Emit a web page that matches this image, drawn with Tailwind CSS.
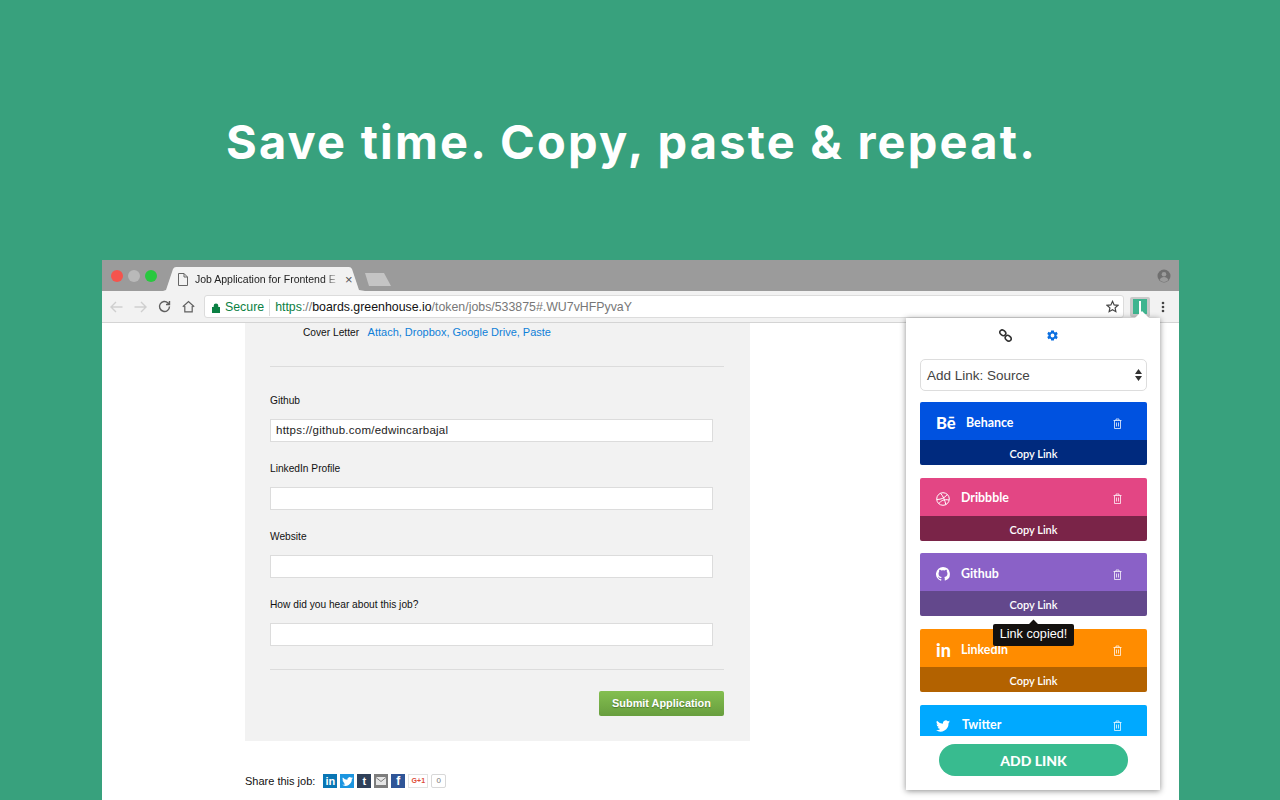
<!DOCTYPE html>
<html><head><meta charset="utf-8"><script src="https://cdn.jsdelivr.net/npm/@tailwindcss/browser@4"></script></head>
<body class="m-0 w-[1280px] h-[800px] overflow-hidden bg-[#38a17d] font-['Liberation_Sans',sans-serif]">
<div class="h-[260px] pt-[22px] pr-[17px] flex items-center justify-center">
  <h1 class="text-white text-[47px] font-bold tracking-[2.200px] font-['Inter',sans-serif] leading-none whitespace-nowrap">Save time. Copy, paste &amp; repeat.</h1>
</div>
<div class="relative ml-[102px] w-[1077px] h-[540px] flex flex-col bg-white">
  <!-- tab strip -->
  <div class="h-[31px] bg-[#9b9b9b] flex items-end relative shrink-0">
    <div class="flex gap-[5px] ml-[9px] mb-[9px] self-end">
      <span class="w-[12px] h-[12px] rounded-full bg-[#f5544d]"></span>
      <span class="w-[12px] h-[12px] rounded-full bg-[#b9b9b9]"></span>
      <span class="w-[12px] h-[12px] rounded-full bg-[#28c83f]"></span>
    </div>
    <div class="ml-[6px] relative w-[202px] h-[24px] flex items-center pl-[15px] pt-[1px]">
      <svg class="absolute left-0 top-0" width="202" height="24" viewBox="0 0 202 24"><path d="M0 24 L3 23 L10 2 Q11 0 13 0 L186 0 Q188 0 189 2 L196 23 L202 24 Z" fill="#f2f2f2"/></svg>
      <svg class="relative mr-[7px]" width="10" height="13" viewBox="0 0 10 13" fill="none" stroke="#666" stroke-width="1"><path d="M.5.5H6L9.500 4V12.500H.5ZM6 .5V4H9.500"/></svg>
      <span class="relative w-[146px] overflow-hidden whitespace-nowrap text-[10.500px] text-[#222] [mask-image:linear-gradient(to_right,#000_88%,transparent)]">Job Application for Frontend E</span>
      <span class="relative ml-[4px] text-[13px] leading-none text-[#555]">×</span>
    </div>
    <svg class="ml-[-1px] mb-[4px]" width="28" height="14" viewBox="0 0 28 14"><path d="M1 0H20L27 13H5Z" fill="#c4c4c4"/></svg>
    <svg class="absolute right-[8px] top-[9px]" width="14" height="14" viewBox="0 0 14 14"><circle cx="7" cy="7" r="6.500" fill="#6f6f6f"/><circle cx="7" cy="5.200" r="2.300" fill="#9b9b9b"/><path d="M2.600 11c.6-2 2.600-3 4.400-3s3.800 1 4.400 3a6 6 0 0 1-8.800 0Z" fill="#9b9b9b"/></svg>
  </div>
  <!-- toolbar -->
  <div class="h-[32px] bg-[#f2f2f2] border-b border-[#d4d4d4] flex items-center shrink-0 relative">
    <div class="flex items-center gap-[11px] ml-[8px] w-[94px]">
      <svg width="13" height="12" viewBox="0 0 13 12" fill="none" stroke="#cfcfcf" stroke-width="1.400"><path d="M12.500 6H1M6 1 1 6l5 5"/></svg>
      <svg width="13" height="12" viewBox="0 0 13 12" fill="none" stroke="#cfcfcf" stroke-width="1.400"><path d="M.5 6H12M7 1l5 5-5 5"/></svg>
      <svg width="13" height="13" viewBox="0 0 13 13" fill="none" stroke="#5f5f5f" stroke-width="1.400"><path d="M11.500 6.500a5 5 0 1 1-1.500-3.600L11.500 4.500M11.500 1v3.500H8"/></svg>
      <svg width="13" height="13" viewBox="0 0 13 13" fill="none" stroke="#5f5f5f" stroke-width="1.200"><path d="M.8 6.800 6.500 1.500l5.700 5.300M2.800 6v5.800h7.400V6"/></svg>
    </div>
    <div class="w-[920px] h-[23px] pt-[2px] bg-white rounded-[3px] border border-[#dcdcdc] flex items-center text-[12.350px] whitespace-nowrap">
      <svg class="ml-[7px] mr-[5px]" width="8" height="10" viewBox="0 0 8 10"><path d="M1.700 4V2.800a2.300 2.300 0 0 1 4.600 0V4H8v6H0V4Z" fill="#0b8043"/></svg>
      <span class="text-[#0b8043] pr-[5px] border-r border-[#dddddd] h-[17px] leading-[17px]">Secure</span>
      <span class="ml-[5px] text-[#0b8043]">https</span><span class="text-[#777]">://</span><span class="text-[#111]">boards.greenhouse.io</span><span class="text-[#777]">/token/jobs/533875#.WU7vHFPyvaY</span>
      <svg class="ml-auto mr-[4px] mb-[2px]" width="13" height="13" viewBox="0 0 24 24" fill="none" stroke="#444" stroke-width="2.200"><path d="M12 2.500 15 9l7 .8-5.200 4.700L18.200 21.500 12 18l-6.200 3.500 1.400-7L2 9.800 9 9Z"/></svg>
    </div>
    <div class="ml-[6px] w-[20px] h-[20px] bg-[#c9c9c9] rounded-[2px] flex items-center justify-center">
      <div class="w-[14px] h-[15px] bg-[#3fb48f] flex justify-center"><span class="w-[2px] h-[13px] mt-[2px] bg-white"></span></div>
    </div>
    <svg class="ml-[11px]" width="4" height="12" viewBox="0 0 4 12" fill="#444"><circle cx="2" cy="2" r="1.300"/><circle cx="2" cy="6" r="1.300"/><circle cx="2" cy="10" r="1.300"/></svg>
  </div>
  <!-- page -->
  <div class="flex-1 overflow-hidden pl-[143px] text-[11px] text-[#111]">
    <div class="w-[505px] h-[418px] bg-[#f2f2f2] px-[25px] pt-[3px]">
      <div class="pl-[33px] flex items-center h-[13px]"><span class="text-[10.200px]">Cover Letter</span><span class="ml-[8.500px] text-[#0f80d8]">Attach, Dropbox, Google Drive, Paste</span></div>
      <div class="mt-[27px] border-t border-[#dcdcdc] w-[454px]"></div>
      <div class="mt-[27px] h-[13px] leading-[13px] text-[10.200px]">Github</div>
      <div class="mt-[12px] w-[443px] h-[23px] bg-white border border-[#dcdcdc] px-[5px] text-[11.500px] leading-[21px] tracking-[0.25px] text-[#222]">https://github.com/edwincarbajal</div>
      <div class="mt-[20px] h-[13px] leading-[13px] text-[10.200px]">LinkedIn Profile</div>
      <div class="mt-[12px] w-[443px] h-[23px] bg-white border border-[#dcdcdc]"></div>
      <div class="mt-[20px] h-[13px] leading-[13px] text-[10.200px]">Website</div>
      <div class="mt-[12px] w-[443px] h-[23px] bg-white border border-[#dcdcdc]"></div>
      <div class="mt-[20px] h-[13px] leading-[13px] text-[10.200px]">How did you hear about this job?</div>
      <div class="mt-[12px] w-[443px] h-[23px] bg-white border border-[#dcdcdc]"></div>
      <div class="mt-[23px] border-t border-[#dcdcdc] w-[454px]"></div>
      <div class="mt-[21px] w-[454px] flex justify-end">
        <div class="w-[125px] h-[25px] rounded-[2px] bg-gradient-to-b from-[#84bf50] to-[#689e3e] text-white font-bold text-[10.900px] flex items-center justify-center [text-shadow:0_1px_1px_rgba(0,0,0,0.3)]">Submit Application</div>
      </div>
    </div>
    <div class="mt-[33px] flex items-center h-[14px]">
      <span class="mr-[8px]">Share this job:</span>
      <div class="flex gap-[3px]">
        <span class="w-[14px] h-[14px] bg-[#0976b4] text-white text-[11px] font-bold leading-[14px] text-center">in</span>
        <span class="w-[14px] h-[14px] bg-[#1b95e0] flex items-center justify-center"><svg width="11" height="9" viewBox="0 0 24 20" fill="#fff"><path d="M24 2.400a10 10 0 0 1-2.800.8A5 5 0 0 0 23.300.5a10 10 0 0 1-3.100 1.200A5 5 0 0 0 11.800 6 14 14 0 0 1 1.700.9a5 5 0 0 0 1.500 6.600 5 5 0 0 1-2.200-.6 5 5 0 0 0 3.900 4.900 5 5 0 0 1-2.200.1 5 5 0 0 0 4.600 3.400A10 10 0 0 1 0 17.400 14 14 0 0 0 21.500 5 10 10 0 0 0 24 2.400Z"/></svg></span>
        <span class="w-[14px] h-[14px] bg-[#2f4059] text-white text-[11px] font-bold leading-[14px] text-center">t</span>
        <span class="w-[14px] h-[14px] bg-[#7d7d7d] flex items-center justify-center"><svg width="10" height="8" viewBox="0 0 10 8"><rect width="10" height="8" fill="#e6e6e6"/><path d="M0 .5 5 4.500 10 .5" fill="none" stroke="#7d7d7d"/></svg></span>
        <span class="w-[14px] h-[14px] bg-[#2f5597] text-white text-[12px] font-bold leading-[15px] text-center">f</span>
        <span class="w-[20px] h-[14px] bg-white border border-[#e2e2e2] text-[#dd4b39] text-[7px] font-bold leading-[12px] text-center">G+1</span>
      </div>
      <span class="ml-[3px] w-[15px] h-[14px] bg-white border border-[#d8d8d8] rounded-[2px] text-[#777] text-[8px] leading-[12px] text-center">0</span>
    </div>
  </div>
  <!-- popup -->
  <div class="absolute left-[804px] top-[58px] w-[254px] h-[472px] bg-white shadow-[0_1px_6px_rgba(0,0,0,0.45)] pl-[14px] pr-[13px] flex flex-col font-['Lato',sans-serif]">
    <span class="absolute right-[13px] top-[-5px] w-[10px] h-[10px] bg-white rotate-45"></span>
    <div class="h-[41px] shrink-0 flex items-start pt-[11px] justify-center gap-[34px] pr-[9px]">
      <svg width="13" height="13" viewBox="0 0 13 13" fill="none" stroke="#333" stroke-width="1.600"><ellipse cx="3.800" cy="3.800" rx="3.200" ry="2.500" transform="rotate(40 3.800 3.800)"/><ellipse cx="9.200" cy="9.200" rx="3.200" ry="2.500" transform="rotate(40 9.200 9.200)"/></svg>
      <svg width="13" height="13" viewBox="0 0 24 24" fill="#0a6ee0"><path d="M19.400 13a7.600 7.600 0 0 0 0-2l2.300-1.700-2.300-4-2.600 1.100a7.500 7.500 0 0 0-1.800-1L14.600 2.600H9.400L9 5.400a7.500 7.500 0 0 0-1.800 1L4.600 5.300l-2.300 4L4.600 11a7.600 7.600 0 0 0 0 2l-2.300 1.700 2.300 4 2.600-1.100a7.500 7.500 0 0 0 1.800 1l.4 2.800h5.200l.4-2.800a7.500 7.500 0 0 0 1.800-1l2.600 1.100 2.300-4ZM12 15.500a3.500 3.500 0 1 1 0-7 3.500 3.500 0 0 1 0 7Z"/></svg>
    </div>
    <div class="h-[32px] shrink-0 rounded-[5px] border border-[#dddddd] flex items-center pl-[6px] pr-[4px] text-[13.500px] text-[#444] font-['Liberation_Sans',sans-serif]">
      <span class="pt-[2px]">Add Link: Source</span>
      <svg class="ml-auto" width="7" height="14" viewBox="0 0 7 14" fill="#333"><path d="M3.500 1 7 6H0ZM3.500 13 0 8h7Z"/></svg>
    </div>
    <div class="mt-[11px] h-[334px] overflow-hidden shrink-0">
      <div class="h-[63px] rounded-[2px] overflow-hidden mb-[12.700px] flex flex-col text-white">
        <div class="h-[38px] bg-[#0052e0] flex items-center pt-[4px] pl-[16px] pr-[25px]"><span class="w-[30px] text-[16.500px] font-black leading-none">Bē</span><span class="text-[12.400px] font-bold">Behance</span>
          <svg class="ml-auto" width="9" height="11" viewBox="0 0 9 11" fill="none" stroke="#fff" stroke-opacity=".75"><path d="M.5 2.500h8M3 2.500V1h3v1.500M1.500 2.500v8h6v-8M3.500 4.500v4M5.500 4.500v4"/></svg></div>
        <div class="h-[25px] bg-[#002a7e] text-center text-[11px] font-semibold leading-[27px]">Copy Link</div>
      </div>
      <div class="h-[63px] rounded-[2px] overflow-hidden mb-[12.700px] flex flex-col text-white">
        <div class="h-[38px] bg-[#e34684] flex items-center pt-[4px] pl-[16px] pr-[25px]"><svg class="mr-[11px]" width="14" height="14" viewBox="0 0 14 14" fill="none" stroke="#fff"><circle cx="7" cy="7" r="6.300"/><path d="M4.500 1.300C7 4 9 8 9.800 12.700M1 7.500C5 7.500 9 6 11.200 2.500M2.800 11.700C5 8.500 8 7 13 8"/></svg><span class="text-[12.400px] font-bold">Dribbble</span>
          <svg class="ml-auto" width="9" height="11" viewBox="0 0 9 11" fill="none" stroke="#fff" stroke-opacity=".75"><path d="M.5 2.500h8M3 2.500V1h3v1.500M1.500 2.500v8h6v-8M3.500 4.500v4M5.500 4.500v4"/></svg></div>
        <div class="h-[25px] bg-[#7a2448] text-center text-[11px] font-semibold leading-[27px]">Copy Link</div>
      </div>
      <div class="h-[63px] rounded-[2px] overflow-hidden mb-[12.700px] flex flex-col text-white">
        <div class="h-[38px] bg-[#8a61c7] flex items-center pt-[4px] pl-[16px] pr-[25px]"><svg class="mr-[11px]" width="14" height="14" viewBox="0 0 16 16" fill="#fff"><path d="M8 0a8 8 0 0 0-2.500 15.600c.4.100.5-.2.500-.4v-1.400c-2.200.5-2.700-1-2.700-1-.4-.9-.9-1.200-.9-1.200-.7-.5.100-.5.100-.5.800.1 1.200.8 1.200.8.700 1.200 1.900.9 2.300.7.100-.5.300-.9.500-1.100-1.800-.2-3.600-.9-3.600-4 0-.9.300-1.600.8-2.100-.1-.2-.4-1 .1-2.100 0 0 .7-.2 2.200.8a7.600 7.600 0 0 1 4 0c1.500-1 2.200-.8 2.200-.8.400 1.100.2 1.900.1 2.100.5.600.8 1.300.8 2.100 0 3.100-1.900 3.700-3.700 3.900.3.300.6.800.6 1.500v2.200c0 .2.100.5.600.4A8 8 0 0 0 8 0Z"/></svg><span class="text-[12.400px] font-bold">Github</span>
          <svg class="ml-auto" width="9" height="11" viewBox="0 0 9 11" fill="none" stroke="#fff" stroke-opacity=".75"><path d="M.5 2.500h8M3 2.500V1h3v1.500M1.500 2.500v8h6v-8M3.500 4.500v4M5.500 4.500v4"/></svg></div>
        <div class="h-[25px] bg-[#63488c] text-center text-[11px] font-semibold leading-[27px]">Copy Link</div>
      </div>
      <div class="h-[63px] rounded-[2px] overflow-hidden mb-[12.700px] flex flex-col text-white">
        <div class="h-[38px] bg-[#ff8c00] flex items-center pt-[4px] pl-[16px] pr-[25px]"><span class="w-[25px] text-[18px] font-black leading-none">in</span><span class="text-[12.400px] font-bold">LinkedIn</span>
          <svg class="ml-auto" width="9" height="11" viewBox="0 0 9 11" fill="none" stroke="#fff" stroke-opacity=".75"><path d="M.5 2.500h8M3 2.500V1h3v1.500M1.500 2.500v8h6v-8M3.500 4.500v4M5.500 4.500v4"/></svg></div>
        <div class="h-[25px] bg-[#b36200] text-center text-[11px] font-semibold leading-[27px]">Copy Link</div>
      </div>
      <div class="h-[63px] rounded-[2px] overflow-hidden flex flex-col text-white">
        <div class="h-[38px] bg-[#00a9ff] flex items-center pt-[4px] pl-[16px] pr-[25px]"><svg class="mr-[12px]" width="14" height="12" viewBox="0 0 24 20" fill="#fff"><path d="M24 2.400a10 10 0 0 1-2.800.8A5 5 0 0 0 23.300.5a10 10 0 0 1-3.100 1.200A5 5 0 0 0 11.800 6 14 14 0 0 1 1.700.9a5 5 0 0 0 1.500 6.600 5 5 0 0 1-2.200-.6 5 5 0 0 0 3.900 4.900 5 5 0 0 1-2.200.1 5 5 0 0 0 4.600 3.400A10 10 0 0 1 0 17.400 14 14 0 0 0 21.500 5 10 10 0 0 0 24 2.400Z"/></svg><span class="text-[12.400px] font-bold">Twitter</span>
          <svg class="ml-auto" width="9" height="11" viewBox="0 0 9 11" fill="none" stroke="#fff" stroke-opacity=".75"><path d="M.5 2.500h8M3 2.500V1h3v1.500M1.500 2.500v8h6v-8M3.500 4.500v4M5.500 4.500v4"/></svg></div>
      </div>
    </div>
    <div class="mt-[8px] mx-[19px] h-[32px] shrink-0 rounded-full bg-[#38bb8f] text-white text-[14px] font-black flex items-center justify-center">ADD LINK</div>
    <!-- tooltip -->
    <div class="absolute left-[87px] top-[306px] w-[81px] h-[22px] rounded-[2px] bg-[#14110f] text-white text-[12.700px] font-['Liberation_Sans',sans-serif] flex items-center justify-center">Link copied!<span class="absolute left-[37px] top-[-3px] w-[7px] h-[7px] bg-[#14110f] rotate-45"></span></div>
  </div>
</div>
</body></html>
